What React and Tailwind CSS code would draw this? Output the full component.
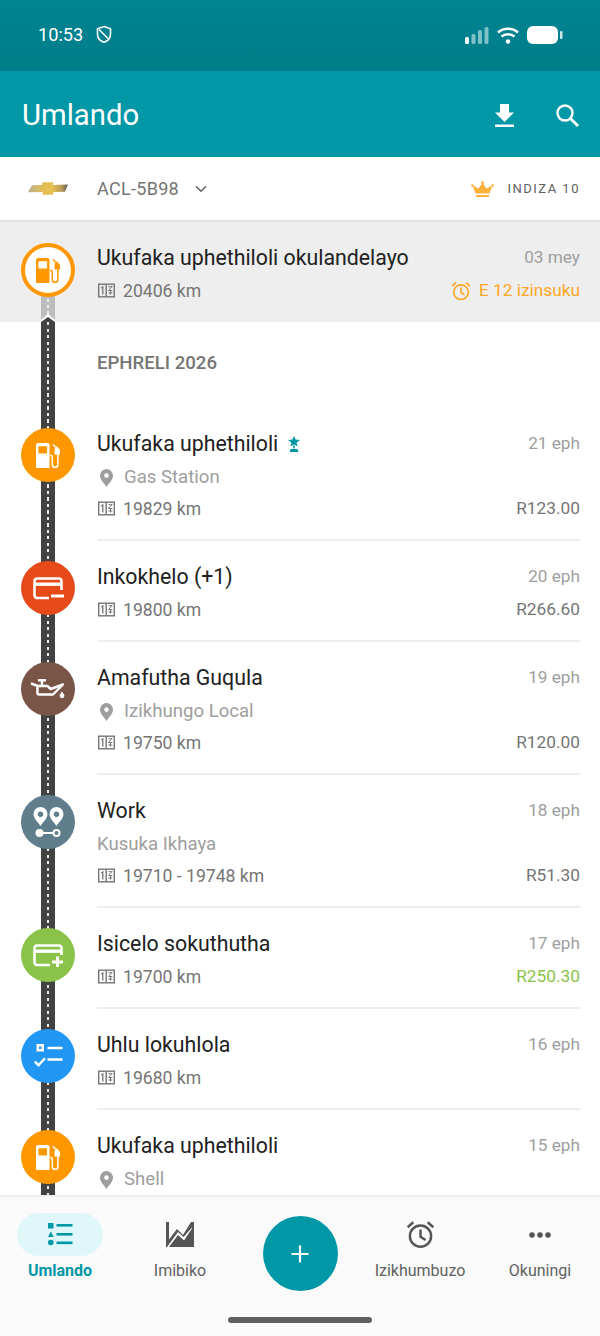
import { ChevronDown, Plus } from "lucide-react";

const FONT = "font-['Roboto',sans-serif]";

function GasIcon({ className = "text-white" }) {
  return (
    <svg viewBox="0 0 25 25" className={`h-[25px] w-[25px] ${className}`} fill="none">
      <path
        fillRule="evenodd"
        fill="currentColor"
        d="M2 0h9.500a2 2 0 0 1 2 2v23H0V2a2 2 0 0 1 2-2zm1 3.200a.6.6 0 0 0-.6.6v6a.6.6 0 0 0 .6.6h7.500a.6.6 0 0 0 .6-.6v-6a.6.6 0 0 0-.6-.6z"
      />
      <path d="M14 12.500h.8a1.500 1.500 0 0 1 1.500 1.500v7.500a2.800 2.800 0 0 0 5.600 0V10" stroke="currentColor" strokeWidth="1.500" />
      <path d="M17 1.500l2.500 2.500" stroke="currentColor" strokeWidth="1.500" />
      <path d="M19.500 3.500h1.500l3 3.500v4.500h-5.500V7z" fill="currentColor" />
    </svg>
  );
}

function CardMinusIcon() {
  return (
    <svg viewBox="0 0 31 23" className="h-[23px] w-[31px] text-white" fill="none">
      <path d="M16 21H4.200a2.700 2.700 0 0 1-2.700-2.700V4.200a2.700 2.700 0 0 1 2.700-2.700h21.600a2.700 2.700 0 0 1 2.700 2.700V13" stroke="currentColor" strokeWidth="2.600" />
      <rect x="1.500" y="5.500" width="27" height="3.400" fill="currentColor" />
      <rect x="18" y="17.500" width="13" height="3" fill="currentColor" />
    </svg>
  );
}

function CardPlusIcon() {
  return (
    <svg viewBox="0 0 31 23" className="h-[23px] w-[31px] text-white" fill="none">
      <path d="M17 21H4.200a2.700 2.700 0 0 1-2.700-2.700V4.200a2.700 2.700 0 0 1 2.700-2.700h21.600a2.700 2.700 0 0 1 2.700 2.700V11" stroke="currentColor" strokeWidth="2.600" />
      <rect x="1.500" y="5.500" width="27" height="3.400" fill="currentColor" />
      <path d="M19 18h11M24.500 12.500v10.500" stroke="currentColor" strokeWidth="3" />
    </svg>
  );
}

function OilIcon() {
  return (
    <svg viewBox="0 0 36 20" className="h-[20px] w-[36px] text-white" fill="none">
      <path d="M8 1.200h8M12 1.200V6" stroke="currentColor" strokeWidth="2.400" />
      <path d="M1 4.500l7 2.500M7.500 7h10l3.200 3L33 5.500 23 15.500H8.600a1.200 1.200 0 0 1-1.200-1.200z" stroke="currentColor" strokeWidth="2.400" strokeLinejoin="round" />
      <path d="M32 12.500c1.400 2 2.400 3 2.400 4.300a2.400 2.400 0 0 1-4.800 0c0-1.300 1-2.300 2.400-4.300z" fill="currentColor" />
    </svg>
  );
}

function RouteIcon() {
  return (
    <svg viewBox="0 0 31 31" className="h-[31px] w-[31px] text-white" fill="none">
      <path
        fillRule="evenodd"
        fill="currentColor"
        d="M7.500 0A7 7 0 0 1 14.500 7c0 4.500-4.500 8-7 12-2.500-4-7-7.500-7-12a7 7 0 0 1 7-7zm0 4.500a2.700 2.700 0 1 0 0 5.400 2.700 2.700 0 0 0 0-5.400z"
      />
      <path
        fillRule="evenodd"
        fill="currentColor"
        d="M23.500 0A7 7 0 0 1 30.500 7c0 4.500-4.500 8-7 12-2.500-4-7-7.500-7-12a7 7 0 0 1 7-7zm0 4.500a2.700 2.700 0 1 0 0 5.400 2.700 2.700 0 0 0 0-5.400z"
      />
      <circle cx="6.500" cy="26" r="4" fill="currentColor" />
      <path d="M10 26h10" stroke="currentColor" strokeWidth="2" />
      <circle cx="23.500" cy="26" r="3" stroke="currentColor" strokeWidth="2" />
    </svg>
  );
}

function ChecklistIcon() {
  return (
    <svg viewBox="0 0 29 24" className="h-[24px] w-[29px] text-white" fill="none">
      <path fillRule="evenodd" d="M2.500 0h7.500v7.500H2.500zM5 2.500V5h2.500V2.500z" fill="currentColor" />
      <path d="M13.500 4h15M13.500 15.500h15" stroke="currentColor" strokeWidth="2.400" />
      <path d="M.8 17.500l3.700 3.700 6.500-7" stroke="currentColor" strokeWidth="2.400" />
    </svg>
  );
}

function OdoIcon() {
  return (
    <svg viewBox="0 0 17 14" className="h-[15px] w-[17px] shrink-0 text-[#757575]" fill="none">
      <rect x=".7" y=".7" width="15.600" height="12.600" stroke="currentColor" strokeWidth="1.400" />
      <path d="M8.200 1v12" stroke="currentColor" strokeWidth="1.400" />
      <path d="M3.200 4.500L4.800 3.500v7.500" stroke="currentColor" strokeWidth="1.300" />
      <path d="M10.500 3.200h3.800M14 3l-3.500 4 3.800 0M12.500 7v4M10.500 9.500h3.800" stroke="currentColor" strokeWidth="1" />
    </svg>
  );
}

function PinIcon() {
  return (
    <svg viewBox="0 0 13 18" className="h-[18px] w-[13px] text-[#9e9e9e]">
      <path
        fillRule="evenodd"
        fill="currentColor"
        d="M6.500 0A6.500 6.500 0 0 1 13 6.500C13 11 8.500 14.500 6.500 18 4.500 14.500 0 11 0 6.500A6.500 6.500 0 0 1 6.500 0zm0 4.300a2.300 2.300 0 1 0 0 4.600 2.300 2.300 0 0 0 0-4.600z"
      />
    </svg>
  );
}

function StarStandIcon() {
  return (
    <svg viewBox="0 0 12 16" className="h-[16px] w-[12px] text-[#0097a7]">
      <path fill="currentColor" d="M6 0l1.600 3.600L12 4 8.600 6.800 9.700 10.500 6 8.500 2.300 10.500 3.400 6.800 0 4l4.400-.4z" />
      <path fill="currentColor" d="M5.200 9.500h1.600v3H5.200zM2.500 13h7l.8 3H1.700z" />
    </svg>
  );
}

function ChevroletLogo() {
  return (
    <svg viewBox="0 0 40 13" className="h-[13px] w-[40px]">
      <defs>
        <linearGradient id="bowtie" x1="0" x2="1" y1="0" y2="0">
          <stop offset="0" stopColor="#b5ad94" />
          <stop offset=".35" stopColor="#e2bd55" />
          <stop offset=".6" stopColor="#e8c052" />
          <stop offset=".85" stopColor="#b59a55" />
          <stop offset="1" stopColor="#55585c" />
        </linearGradient>
      </defs>
      <path fill="url(#bowtie)" d="M4 3.200L14 3l.6-2.800h10.800L24.800 3 40 2.500 37 9.800l-11.500.2-.6 2.800H14.200l.6-2.800L0 10.200z" />
    </svg>
  );
}

function CrownIcon() {
  return (
    <svg viewBox="0 0 23 16" className="h-[16px] w-[23px] text-[#ffb13d]">
      <circle cx="11.500" cy="1.500" r="1.500" fill="currentColor" />
      <circle cx="1.300" cy="4.500" r="1.300" fill="currentColor" />
      <circle cx="21.700" cy="4.500" r="1.300" fill="currentColor" />
      <path fill="currentColor" d="M11.500 2L15.500 7.500 21.500 4.500 18.500 12.500H4.500L1.500 4.500 7.500 7.500z" />
      <rect x="5" y="14" width="13" height="2" fill="currentColor" />
    </svg>
  );
}

function AlarmIcon({ className }) {
  return (
    <svg viewBox="0 0 26 26" className={className} fill="none">
      <circle cx="13" cy="14.500" r="9.500" stroke="currentColor" strokeWidth="2.200" />
      <path d="M13 8.500v6.500l4.500 3M1.500 6.500L6.500 2M24.500 6.500L19.500 2" stroke="currentColor" strokeWidth="2.200" />
    </svg>
  );
}

function ListNavIcon() {
  return (
    <svg viewBox="0 0 25 23" className="h-[23px] w-[25px] text-[#0097a7]">
      <rect x="0" y="0" width="5.500" height="5.500" fill="currentColor" />
      <path fill="currentColor" d="M2.800 8.500L5.800 14H0z" />
      <circle cx="2.800" cy="19.500" r="2.800" fill="currentColor" />
      <rect x="8.500" y="1" width="16" height="2.600" fill="currentColor" />
      <rect x="8.500" y="10" width="16" height="2.600" fill="currentColor" />
      <rect x="8.500" y="18.500" width="16" height="2.600" fill="currentColor" />
    </svg>
  );
}

function ChartNavIcon() {
  return (
    <svg viewBox="0 0 28 25" className="h-[25px] w-[28px] text-[#555]">
      <path fill="currentColor" d="M0 0h3v17.500L11 7l6 6 8-13h3v25H3l9-12 6 5.500 8-12v-1l-8.500 9.500-5.500-5L1 25H0z" />
      <path fill="currentColor" d="M4 25l8.500-10.500 5.700 5L27 8v17z" />
    </svg>
  );
}

function RoadDashes() {
  return (
    <div className="absolute inset-y-0 left-[6px] w-[2px] bg-[repeating-linear-gradient(to_bottom,#eeeeee_0,#eeeeee_3px,transparent_3px,transparent_6.500px)]" />
  );
}

function EventIcon({ color, children }) {
  return (
    <div className={`relative z-10 flex h-[54px] w-[54px] items-center justify-center rounded-full ${color}`}>
      {children}
    </div>
  );
}

const ITEMS = [
  {
    title: "Ukufaka uphethiloli",
    star: true,
    date: "21 eph",
    place: "Gas Station",
    pin: true,
    odo: "19829 km",
    price: "R123.00",
    color: "bg-[#ff9800]",
    icon: <GasIcon />,
  },
  {
    title: "Inkokhelo (+1)",
    date: "20 eph",
    odo: "19800 km",
    price: "R266.60",
    color: "bg-[#e64a19]",
    icon: <CardMinusIcon />,
  },
  {
    title: "Amafutha Guqula",
    date: "19 eph",
    place: "Izikhungo Local",
    pin: true,
    odo: "19750 km",
    price: "R120.00",
    color: "bg-[#795548]",
    icon: <OilIcon />,
  },
  {
    title: "Work",
    date: "18 eph",
    place: "Kusuka Ikhaya",
    odo: "19710 - 19748 km",
    price: "R51.30",
    color: "bg-[#607d8b]",
    icon: <RouteIcon />,
  },
  {
    title: "Isicelo sokuthutha",
    date: "17 eph",
    odo: "19700 km",
    price: "R250.30",
    priceColor: "text-[#8bc34a]",
    color: "bg-[#8bc34a]",
    icon: <CardPlusIcon />,
  },
  {
    title: "Uhlu lokuhlola",
    date: "16 eph",
    odo: "19680 km",
    color: "bg-[#2196f3]",
    icon: <ChecklistIcon />,
  },
  {
    title: "Ukufaka uphethiloli",
    date: "15 eph",
    place: "Shell",
    pin: true,
    odo: "",
    color: "bg-[#ff9800]",
    icon: <GasIcon />,
  },
];

function HistoryRow({ item }) {
  const tall = Boolean(item.place);
  return (
    <div className={`flex shrink-0 ${tall ? "h-[133px]" : "h-[101px]"}`}>
      <div className="w-[97px] shrink-0 pl-[21px] pt-5">
        <EventIcon color={item.color}>{item.icon}</EventIcon>
      </div>
      <div className="mr-5 min-w-0 flex-1 border-b-2 border-[#eeeeee] pt-[22px]">
        <div className="flex h-7 items-center justify-between">
          <div className="flex items-center gap-[10px] text-[21.300px] text-[#212121]">
            {item.title}
            {item.star && <StarStandIcon />}
          </div>
          <span className="text-[17.200px] text-[#9e9e9e]">{item.date}</span>
        </div>
        {item.place && (
          <div className="mt-[6px] flex h-7 items-center gap-[10px] text-[18.600px] text-[#9e9e9e]">
            {item.pin && (
              <span className="ml-[3px] mr-[1px] flex">
                <PinIcon />
              </span>
            )}
            {item.place}
          </div>
        )}
        {item.odo && (
          <div className={`${tall ? "mt-[3px]" : "mt-[5px]"} flex h-7 items-center justify-between`}>
            <div className="flex items-center gap-2 pl-[1px] text-[17.600px] text-[#757575]">
              <OdoIcon />
              {item.odo}
            </div>
            {item.price && (
              <span className={`text-[17.300px] ${item.priceColor ?? "text-[#757575]"}`}>{item.price}</span>
            )}
          </div>
        )}
      </div>
    </div>
  );
}

function NavItem({ label, active, children }) {
  return (
    <div className="flex flex-col items-center pt-4">
      <div className={`flex h-[43px] w-[86px] items-center justify-center rounded-full ${active ? "bg-[#e0f7fa]" : ""}`}>
        {children}
      </div>
      <span className={`mt-[5px] h-5 text-[16px] leading-5 ${active ? "font-bold text-[#0097a7]" : "text-[#616161]"}`}>
        {label}
      </span>
    </div>
  );
}

export default function App() {
  return (
    <div className={`${FONT} flex h-[1336px] w-[600px] flex-col overflow-hidden bg-white`}>
      {/* Barra de estado */}
      <div className="flex h-[71px] shrink-0 items-center justify-between bg-gradient-to-b from-[#008591] to-[#007d89] pb-[1px] pl-[38px] pr-[37px] text-white">
        <div className="flex items-center gap-[13px]">
          <span className="text-[18.200px]">10:53</span>
          <svg viewBox="0 0 16 18" className="h-[19px] w-[16px]" fill="none">
            <path d="M8 1l6.500 2.200v5.300c0 4-2.800 7-6.500 8.300-3.700-1.300-6.500-4.300-6.500-8.300V3.200z" stroke="currentColor" strokeWidth="1.600" />
            <path d="M3 4l9 9" stroke="currentColor" strokeWidth="1.400" />
          </svg>
        </div>
        <div className="flex items-center gap-2">
          <svg viewBox="0 0 24 17" className="h-[17px] w-[24px]">
            <rect x="0" y="10" width="4" height="7" rx="1.500" fill="#fff" />
            <rect x="6.500" y="7" width="4" height="10" rx="1.500" fill="#fff" opacity=".5" />
            <rect x="13" y="3" width="4" height="14" rx="1.500" fill="#fff" opacity=".5" />
            <rect x="19.500" y="0" width="4" height="17" rx="1.500" fill="#fff" opacity=".5" />
          </svg>
          <svg viewBox="0 0 22 17" className="h-[17px] w-[22px]" fill="none">
            <path d="M1 5.500c5.500-5 14.500-5 20 0M4.500 9.500c3.500-3 9.500-3 13 0" stroke="#fff" strokeWidth="2.400" />
            <circle cx="11" cy="14.500" r="2.200" fill="#fff" />
          </svg>
          <svg viewBox="0 0 36 18" className="h-[18px] w-[36px]">
            <rect x="0" y="0" width="31" height="18" rx="6" fill="#fff" />
            <rect x="33" y="5" width="2.500" height="8" rx="1" fill="#fff" opacity=".8" />
          </svg>
        </div>
      </div>

      {/* Cabeçalho */}
      <div className="flex h-[86px] shrink-0 items-center justify-between bg-[#0097a7] pl-[22px] pr-[21px] pt-[2px] text-white">
        <h1 className="mt-[1px] text-[29.300px] font-normal">Umlando</h1>
        <div className="flex items-center gap-[42px]">
          <svg viewBox="0 0 19 23" className="h-[23px] w-[19px]">
            <path fill="#fff" d="M5 0h9v8.500h5L9.500 18 0 8.500h5z" />
            <rect x="0" y="20.500" width="19" height="2.500" fill="#fff" />
          </svg>
          <svg viewBox="0 0 23 23" className="h-[23px] w-[23px]" fill="none">
            <circle cx="9" cy="9" r="7.500" stroke="#fff" strokeWidth="2.400" />
            <path d="M14.500 14.500L22 22" stroke="#fff" strokeWidth="2.800" />
          </svg>
        </div>
      </div>

      {/* Veículo */}
      <div className="flex h-[65px] shrink-0 items-center justify-between border-b-2 border-[#e4e4e4] pl-[28px] pr-[20px]">
        <div className="flex items-center">
          <ChevroletLogo />
          <span className="ml-[29px] text-[18px] tracking-[0.3px] text-[#757575]">ACL-5B98</span>
          <ChevronDown size={18} strokeWidth={2} className="ml-[13px] text-[#616161]" />
        </div>
        <div className="flex items-center gap-[13px]">
          <CrownIcon />
          <span className="text-[13px] tracking-[1.500px] text-[#616161]">INDIZA 10</span>
        </div>
      </div>

      {/* Lista */}
      <div className="min-h-0 flex-1 overflow-hidden">
        <div className="relative flex h-[100px] bg-[#eeeeee]">
          <div className="absolute bottom-0 left-[41px] top-[70px] w-[14px] bg-[#bdbdbd]">
            <RoadDashes />
          </div>
          <div className="w-[97px] shrink-0 pl-[21px] pt-[21px]">
            <div className="relative z-10 flex h-[54px] w-[54px] items-center justify-center rounded-full border-4 border-[#ff9800] bg-white">
              <GasIcon className="text-[#ff9800]" />
            </div>
          </div>
          <div className="mr-5 min-w-0 flex-1 pt-[22px]">
            <div className="flex h-7 items-center justify-between">
              <span className="text-[21.300px] text-[#212121]">Ukufaka uphethiloli okulandelayo</span>
              <span className="text-[17.200px] text-[#9e9e9e]">03 mey</span>
            </div>
            <div className="mt-[5px] flex h-7 items-center justify-between">
              <div className="flex items-center gap-2 pl-[1px] text-[17.600px] text-[#757575]">
                <OdoIcon />
                20406 km
              </div>
              <div className="flex items-center gap-2 text-[17.300px] text-[#ffa726]">
                <AlarmIcon className="h-[20px] w-[20px]" />
                E 12 izinsuku
              </div>
            </div>
          </div>
        </div>

        <div className="relative">
          <div className="absolute bottom-0 left-[41px] top-0 w-[14px] bg-[#424242]">
            <RoadDashes />
            <svg viewBox="0 0 14 8" className="absolute -top-[8px] left-0 h-[8px] w-[14px]">
              <path d="M0 8V6l7-6 7 6v2z" fill="#fff" />
              <path d="M0 8L7 3l7 5z" fill="#424242" />
            </svg>
          </div>
          <div className="h-[86px] pl-[97px] pt-[27px] text-[18.600px] font-medium leading-7 text-[#757575]">
            EPHRELI 2026
          </div>
          {ITEMS.map((item, i) => (
            <HistoryRow key={i} item={item} />
          ))}
        </div>
      </div>

      {/* Navegação inferior */}
      <div className="h-[141px] shrink-0 border-t-2 border-[#eeeeee] bg-[#fafafa]">
        <div className="grid h-[94px] grid-cols-5">
          <NavItem label="Umlando" active>
            <ListNavIcon />
          </NavItem>
          <NavItem label="Imibiko">
            <ChartNavIcon />
          </NavItem>
          <div className="flex justify-center pt-[19px]">
            <div className="flex h-[75px] w-[75px] items-center justify-center rounded-full bg-[#0097a7] text-white">
              <Plus size={26} strokeWidth={2} />
            </div>
          </div>
          <NavItem label="Izikhumbuzo">
            <AlarmIcon className="h-[29px] w-[29px] text-[#555]" />
          </NavItem>
          <NavItem label="Okuningi">
            <svg viewBox="0 0 22 6" className="h-[6px] w-[22px] text-[#555]">
              <circle cx="3" cy="3" r="2.800" fill="currentColor" />
              <circle cx="11" cy="3" r="2.800" fill="currentColor" />
              <circle cx="19" cy="3" r="2.800" fill="currentColor" />
            </svg>
          </NavItem>
        </div>
        <div className="mx-auto mt-[26px] h-[6px] w-[144px] rounded-full bg-[#616161]" />
      </div>
    </div>
  );
}
